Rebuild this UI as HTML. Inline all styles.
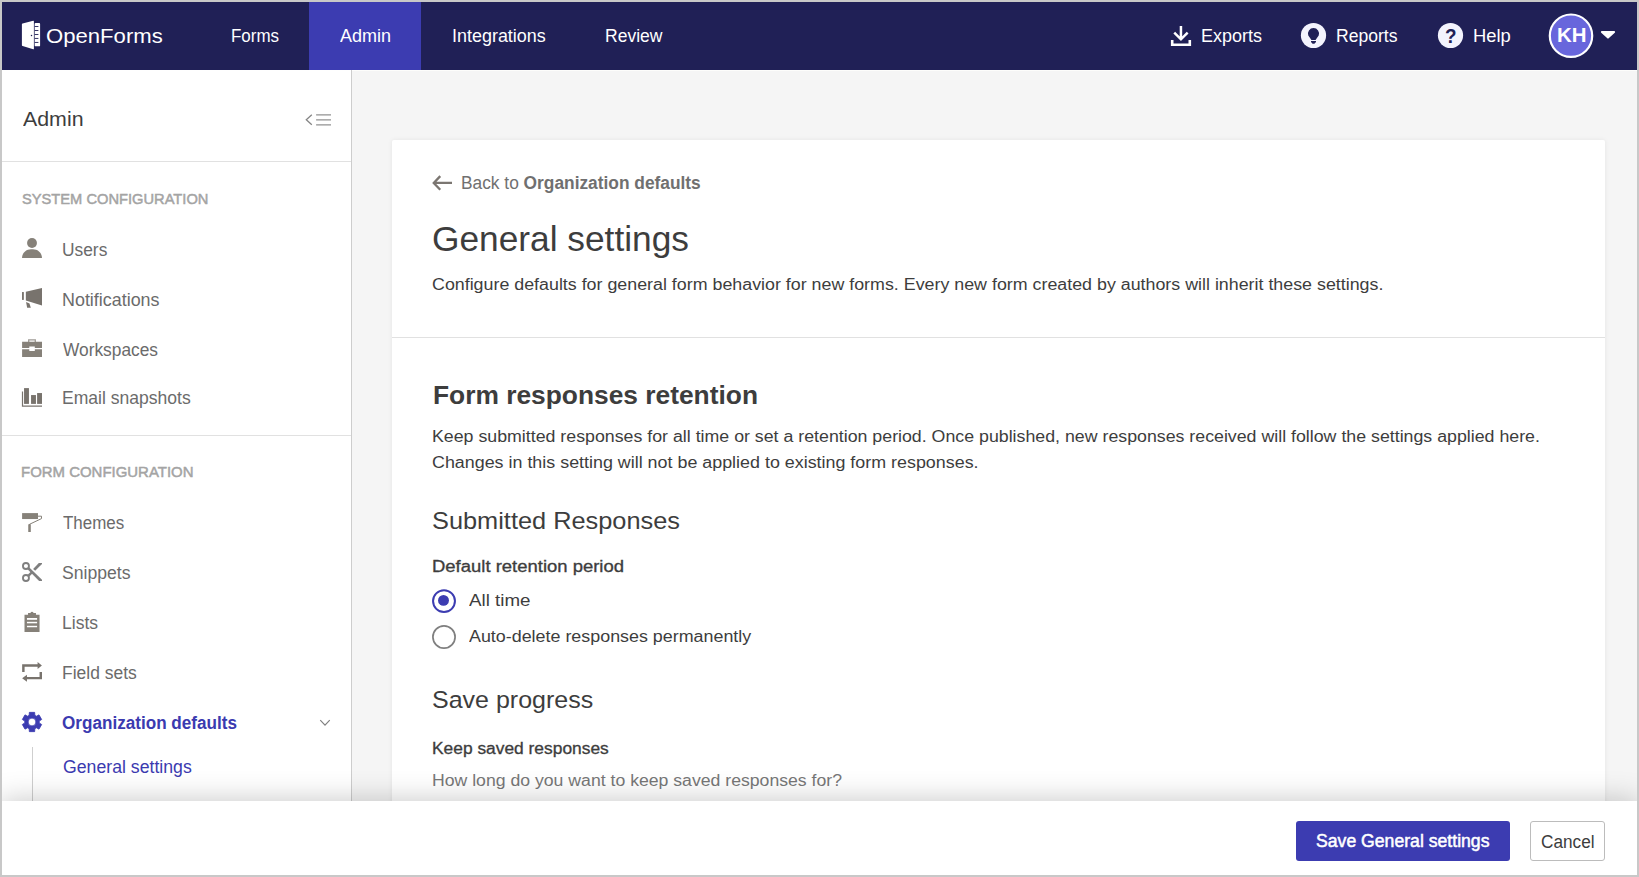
<!DOCTYPE html>
<html lang="en">
<head>
<meta charset="utf-8">
<title>OpenForms - General settings</title>
<style>
*{box-sizing:border-box;margin:0;padding:0}
html,body{width:1639px;height:877px;overflow:hidden;background:#c8c8c8}
body{font-family:"Liberation Sans",sans-serif;color:#3d3d3d;position:relative}
#clip{position:absolute;left:2px;top:2px;width:1635px;height:873px;overflow:hidden;background:#f5f5f5}
#page{position:absolute;left:-2px;top:-2px;width:1639px;height:877px}
.t{position:absolute;white-space:nowrap;line-height:1;transform-origin:0 50%}
.abs{position:absolute}
svg{position:absolute;overflow:visible}
#nav{position:absolute;left:0;top:0;width:1639px;height:70px;background:#202056}
#tab{position:absolute;left:309px;top:0;width:112px;height:70px;background:#3c3cb1}
#side{position:absolute;left:0;top:70px;width:352px;height:807px;background:#fff;border-right:1px solid #cdcdcd}
.hr{position:absolute;height:1px;background:#e1e1e1}
#card{position:absolute;left:392px;top:140px;width:1213px;height:760px;background:#fff;border-radius:2px;box-shadow:0 0 5px rgba(0,0,0,.07)}
#foot{position:absolute;left:0;top:801px;width:1639px;height:76px;background:#fff;box-shadow:0 0 30px rgba(0,0,0,.23)}
#save{position:absolute;left:1296px;top:821px;width:214px;height:40px;background:#3c3cb1;border-radius:3px}
#cancel{position:absolute;left:1530px;top:821px;width:75px;height:40px;background:#fff;border:1px solid #bcbcbc;border-radius:3px}
</style>
</head>
<body>
<div id="clip"><div id="page">

<div class="abs" style="left:352px;top:70px;width:1287px;height:1px;background:#fdfdfb"></div>
<!-- ============ sidebar ============ -->
<div id="side"></div>
<div class="hr" style="left:0;top:161px;width:351px"></div>
<div class="hr" style="left:0;top:435px;width:351px"></div>
<div class="abs" style="left:32px;top:747px;width:1px;height:60px;background:#cfcfcf"></div>
<svg width="1639" height="877" style="left:0;top:0" viewBox="0 0 1639 877">
<circle cx="32" cy="242.95" r="4.95" fill="#868179"/>
<path d="M22,258 C22,253 26,249.15 31,249.15 H33 C38,249.15 42,253 42,258 Z" fill="#868179"/>
<rect x="22" y="292.05" width="1.85" height="7.85" fill="#78736d"/>
<path d="M25.85,291.85 L42,288 V305.4 L25.85,300.45 Z" fill="#78736d"/>
<path d="M26.05,302 L29.5,303.5 L30.8,307.85 H27.15 Z" fill="#78736d"/>
<path d="M22.1,341.85 H42 V347.9 H34.8 V346.6 H29.3 V347.9 H22.1 Z" fill="#868179"/>
<path d="M22.1,349.15 H29.3 V351 H34.8 V349.15 H42 V357 H22.1 Z" fill="#868179"/>
<path d="M28.7,341.9 V339.8 H35.3 V341.9" fill="none" stroke="#868179" stroke-width="1.3" opacity=".8"/>
<path d="M22.5,391.6 V406.2 H42" fill="none" stroke="#78736d" stroke-width="1.2"/>
<rect x="24.05" y="388.1" width="4.9" height="15.8" fill="#78736d"/>
<rect x="31.05" y="395.05" width="4.9" height="8.85" fill="#78736d"/>
<rect x="37.1" y="393.05" width="4.9" height="10.85" fill="#78736d"/>
<rect x="22.1" y="513.1" width="15.9" height="5.95" fill="#868179"/>
<path d="M38,516.2 H41.5 V518.6 L29.5,524.3" fill="none" stroke="#868179" stroke-width="1.0"/>
<path d="M28.25,525 Q28.25,524.05 29.2,524.05 H29.85 Q30.8,524.05 30.8,525 V532 H28.25 Z" fill="#868179"/>
<circle cx="25.95" cy="565.95" r="3.0" fill="none" stroke="#7f7f7f" stroke-width="1.85"/>
<circle cx="25.95" cy="578.03" r="3.0" fill="none" stroke="#7f7f7f" stroke-width="1.85"/>
<path d="M27.3,569.1 L29.1,567.3 L42,579.7 V581 H39.1 Z" fill="#7f7f7f"/>
<path d="M27.4,574.9 L29.1,576.7 L33.4,572.6 L31.6,570.9 Z" fill="#7f7f7f"/>
<path d="M33.15,568.95 L38.8,563.1 H42 V563.9 L35.15,570.8 Z" fill="#7f7f7f"/>
<path d="M24.5,614.75 H28.05 V613.1 H30.3 Q32,610.6 33.7,613.1 H35.95 V614.75 H39.55 V632 H24.5 Z" fill="#868179"/>
<rect x="26.95" y="618" width="10.15" height="1.8" fill="#fff"/>
<rect x="26.95" y="621.8" width="10.15" height="1.5" fill="#fff"/>
<rect x="26.95" y="625.8" width="10.15" height="1.45" fill="#fff"/>
<path d="M22.15,671.9 V664.2 H37.6 V662 L41.9,665.5 L37.6,669 V666.75 H24.6 V671.9 Z" fill="#78736d"/>
<path d="M42,672.05 V679.35 H26.95 V681.75 L22.15,678.25 L26.95,674.8 V677 H39.55 V672.05 Z" fill="#78736d"/>
<path d="M29.16,715.28 L29.33,712.36 L34.67,712.36 L34.84,715.28 L36.40,716.18 L39.01,714.87 L41.68,719.49 L39.24,721.10 L39.24,722.90 L41.68,724.51 L39.01,729.13 L36.40,727.82 L34.84,728.72 L34.67,731.64 L29.33,731.64 L29.16,728.72 L27.60,727.82 L24.99,729.13 L22.32,724.51 L24.76,722.90 L24.76,721.10 L22.32,719.49 L24.99,714.87 L27.60,716.18Z M35.90,722.00 A3.9,3.9 0 1 0 28.10,722.00 A3.9,3.9 0 1 0 35.90,722.00Z" fill="#3c3cb1" fill-rule="evenodd" stroke="#3c3cb1" stroke-width="0.8" stroke-linejoin="round"/>
<path d="M320.25,720.2 L325,725.2 L329.75,720.2" fill="none" stroke="#808080" stroke-width="1.2"/>
<path d="M311.8,114.8 L306.3,119.8 L311.8,124.8" fill="none" stroke="#858585" stroke-width="1.3"/>
<path d="M316.1,114.85 H331 M316.1,119.85 H331 M316.1,124.85 H331" fill="none" stroke="#929292" stroke-width="1.25"/>
</svg>
<div class="t" id="s0" style="left:23.00px;top:110.20px;font-size:19.79px;color:#3d3d3d;transform:scaleX(1.0794);">Admin</div>
<div class="t" id="s1" style="left:21.90px;top:191.33px;font-size:15.2px;color:#a4a4a4;transform:scaleX(0.9662);-webkit-text-stroke:0.5px currentColor;">SYSTEM CONFIGURATION</div>
<div class="t" id="s2" style="left:61.97px;top:242.19px;font-size:17.44px;color:#6b6b6b;transform:scaleX(0.9949);">Users</div>
<div class="t" id="s3" style="left:61.99px;top:292.19px;font-size:17.44px;color:#6b6b6b;transform:scaleX(1.0267);">Notifications</div>
<div class="t" id="s4" style="left:63.00px;top:342.19px;font-size:17.44px;color:#6b6b6b;transform:scaleX(0.9936);">Workspaces</div>
<div class="t" id="s5" style="left:61.99px;top:390.44px;font-size:17.44px;color:#6b6b6b;transform:scaleX(1.0065);">Email snapshots</div>
<div class="t" id="s6" style="left:21.49px;top:464.08px;font-size:15.2px;color:#a4a4a4;transform:scaleX(0.9846);-webkit-text-stroke:0.5px currentColor;">FORM CONFIGURATION</div>
<div class="t" id="s7" style="left:63.00px;top:515.19px;font-size:17.44px;color:#6b6b6b;transform:scaleX(0.9723);">Themes</div>
<div class="t" id="s8" style="left:61.99px;top:565.19px;font-size:17.44px;color:#6b6b6b;transform:scaleX(1.0096);">Snippets</div>
<div class="t" id="s9" style="left:61.97px;top:615.19px;font-size:17.44px;color:#6b6b6b;transform:scaleX(1.0047);">Lists</div>
<div class="t" id="s10" style="left:61.98px;top:665.19px;font-size:17.44px;color:#6b6b6b;transform:scaleX(1.0020);">Field sets</div>
<div class="t" id="s11" style="left:62.00px;top:715.44px;font-size:17.44px;color:#3b3ab0;font-weight:bold;transform:scaleX(0.9817);">Organization defaults</div>
<div class="t" id="s12" style="left:62.99px;top:759.44px;font-size:17.44px;color:#3b3ab0;transform:scaleX(1.0140);">General settings</div>

<!-- ============ card ============ -->
<div id="card"></div>
<div class="hr" style="left:392px;top:337px;width:1213px"></div>
<svg width="1639" height="877" style="left:0;top:0" viewBox="0 0 1639 877">
<circle cx="444" cy="601.1" r="10.95" fill="#fff" stroke="#3c3cb1" stroke-width="2"/>
<circle cx="443.5" cy="600.4" r="5.45" fill="#3c3cb1"/>
<circle cx="444" cy="636.95" r="11.1" fill="#fff" stroke="#7f7f7f" stroke-width="1.7"/>
<path d="M452,182.95 H433.6 M440.25,176.15 L433.75,182.95 L440.25,189.75" fill="none" stroke="#7b7671" stroke-width="2.3" stroke-linejoin="miter"/>
</svg>
<div class="t" id="c0" style="left:461.24px;top:175.35px;font-size:17.54px;color:#707070;transform:scaleX(0.9884);">Back to <b>Organization defaults</b></div>
<div class="t" id="c1" style="left:432.36px;top:221.56px;font-size:35.9px;color:#3d3d3d;transform:scaleX(0.9832);">General settings</div>
<div class="t" id="c2" style="left:431.90px;top:277.12px;font-size:16.63px;color:#3d3d3d;transform:scaleX(1.0735);">Configure defaults for general form behavior for new forms. Every new form created by authors will inherit these settings.</div>
<div class="t" id="c3" style="left:433.27px;top:382.60px;font-size:25.81px;color:#3d3d3d;font-weight:bold;transform:scaleX(1.0212);">Form responses retention</div>
<div class="t" id="c4" style="left:431.90px;top:429.12px;font-size:16.63px;color:#3d3d3d;transform:scaleX(1.0695);">Keep submitted responses for all time or set a retention period. Once published, new responses received will follow the settings applied here.</div>
<div class="t" id="c5" style="left:432.49px;top:455.12px;font-size:16.63px;color:#3d3d3d;transform:scaleX(1.0763);">Changes in this setting will not be applied to existing form responses.</div>
<div class="t" id="c6" style="left:431.99px;top:509.49px;font-size:23.87px;color:#3d3d3d;transform:scaleX(1.0625);">Submitted Responses</div>
<div class="t" id="c7" style="left:431.99px;top:558.62px;font-size:16.63px;color:#3d3d3d;transform:scaleX(1.1121);-webkit-text-stroke:0.32px currentColor;">Default retention period</div>
<div class="t" id="c8" style="left:468.70px;top:592.62px;font-size:16.63px;color:#3d3d3d;transform:scaleX(1.1296);">All time</div>
<div class="t" id="c9" style="left:468.70px;top:629.12px;font-size:16.63px;color:#3d3d3d;transform:scaleX(1.0764);">Auto-delete responses permanently</div>
<div class="t" id="c10" style="left:431.99px;top:688.49px;font-size:23.87px;color:#3d3d3d;transform:scaleX(1.0483);">Save progress</div>
<div class="t" id="c11" style="left:431.99px;top:740.87px;font-size:16.63px;color:#3d3d3d;transform:scaleX(1.0460);-webkit-text-stroke:0.32px currentColor;">Keep saved responses</div>
<div class="t" id="c12" style="left:432.00px;top:772.87px;font-size:16.63px;color:#777777;transform:scaleX(1.0623);">How long do you want to keep saved responses for?</div>

<!-- ============ footer ============ -->
<div id="foot"></div>
<div id="save"></div>
<div id="cancel"></div>
<div class="t" id="f1" style="left:1316.29px;top:833.15px;font-size:17.54px;color:#ffffff;transform:scaleX(1.0058);-webkit-text-stroke:0.5px currentColor;">Save General settings</div>
<div class="t" id="f2" style="left:1541.26px;top:833.65px;font-size:17.54px;color:#3d3d3d;transform:scaleX(0.9822);">Cancel</div>

<!-- ============ top nav ============ -->
<div id="nav"><div id="tab"></div></div>
<svg width="1639" height="877" style="left:0;top:0" viewBox="0 0 1639 877">
<path d="M22.6,23.45 L33.2,20.85 Q33.9,20.7 33.9,21.4 V48.75 Q33.9,49.45 33.2,49.3 L22.6,46.05 Q21.9,45.85 21.9,45.2 V24.3 Q21.9,23.65 22.6,23.45 Z" fill="#ffffff"/>
<rect x="34.65" y="23.1" width="5.45" height="23.2" rx="0.9" fill="#ffffff"/>
<rect x="34.65" y="26.10" width="3.75" height="0.9" fill="#202056"/>
<rect x="34.65" y="30.05" width="3.75" height="0.9" fill="#202056"/>
<rect x="34.65" y="34.00" width="3.75" height="0.9" fill="#202056"/>
<rect x="34.65" y="37.95" width="3.75" height="0.9" fill="#202056"/>
<rect x="34.65" y="41.95" width="3.75" height="0.9" fill="#202056"/>
<circle cx="31.5" cy="35.4" r="0.75" fill="#202056"/>
<path d="M1172.2,39.9 V44.7 H1189.8 V39.9" fill="none" stroke="#ffffff" stroke-width="2.6"/>
<path d="M1180.95,26 V39.6 M1174.25,32.6 L1180.95,39.3 L1187.65,32.6" fill="none" stroke="#ffffff" stroke-width="2.5"/>
<circle cx="1313.5" cy="35.5" r="12.6" fill="#f3f3fd"/>
<path d="M1311.45,40 L1308.3,35.6 A5.55,5.55 0 1 1 1318.7,35.6 L1315.55,40 Z" fill="#202056"/>
<path d="M1311,41.1 H1316 V42.1 L1314.4,43.7 H1312.6 L1311,42.1 Z" fill="#202056"/>
<circle cx="1450.5" cy="35.5" r="12.6" fill="#f3f3fd"/>
<circle cx="1571" cy="35.7" r="21.2" fill="#6866dc" stroke="#ffffff" stroke-width="2.2"/>
<path d="M1601.9,32 H1614.1 L1608,37.6 Z" fill="#ffffff" stroke="#ffffff" stroke-width="2" stroke-linejoin="round"/>
</svg>
<div class="t" id="logo" style="left:46.24px;top:25.42px;font-size:21.01px;color:#ffffff;transform:scaleX(1.0531);">OpenForms</div>
<div class="t" id="n1" style="left:231.22px;top:27.49px;font-size:18.56px;color:#ffffff;transform:scaleX(0.9139);">Forms</div>
<div class="t" id="n2" style="left:340.49px;top:27.49px;font-size:18.56px;color:#ffffff;transform:scaleX(0.9704);">Admin</div>
<div class="t" id="n3" style="left:451.74px;top:27.49px;font-size:18.56px;color:#ffffff;transform:scaleX(0.9675);">Integrations</div>
<div class="t" id="n4" style="left:604.98px;top:27.49px;font-size:18.56px;color:#ffffff;transform:scaleX(0.9458);">Review</div>
<div class="t" id="n5" style="left:1201.07px;top:27.49px;font-size:18.56px;color:#ffffff;transform:scaleX(0.9689);">Exports</div>
<div class="t" id="n6" style="left:1336.47px;top:27.49px;font-size:18.56px;color:#ffffff;transform:scaleX(0.9473);">Reports</div>
<div class="t" id="n7" style="left:1473.44px;top:27.49px;font-size:18.56px;color:#ffffff;transform:scaleX(0.9908);">Help</div>
<div class="t" id="kh" style="left:1557.28px;top:26.11px;font-size:19.89px;color:#ffffff;font-weight:bold;transform:scaleX(1.0270);">KH</div>
<div class="t" id="q" style="left:1444.70px;top:26.16px;font-size:20.6px;color:#202056;font-weight:bold;transform:scaleX(0.9143);">?</div>

</div></div>
</body>
</html>
